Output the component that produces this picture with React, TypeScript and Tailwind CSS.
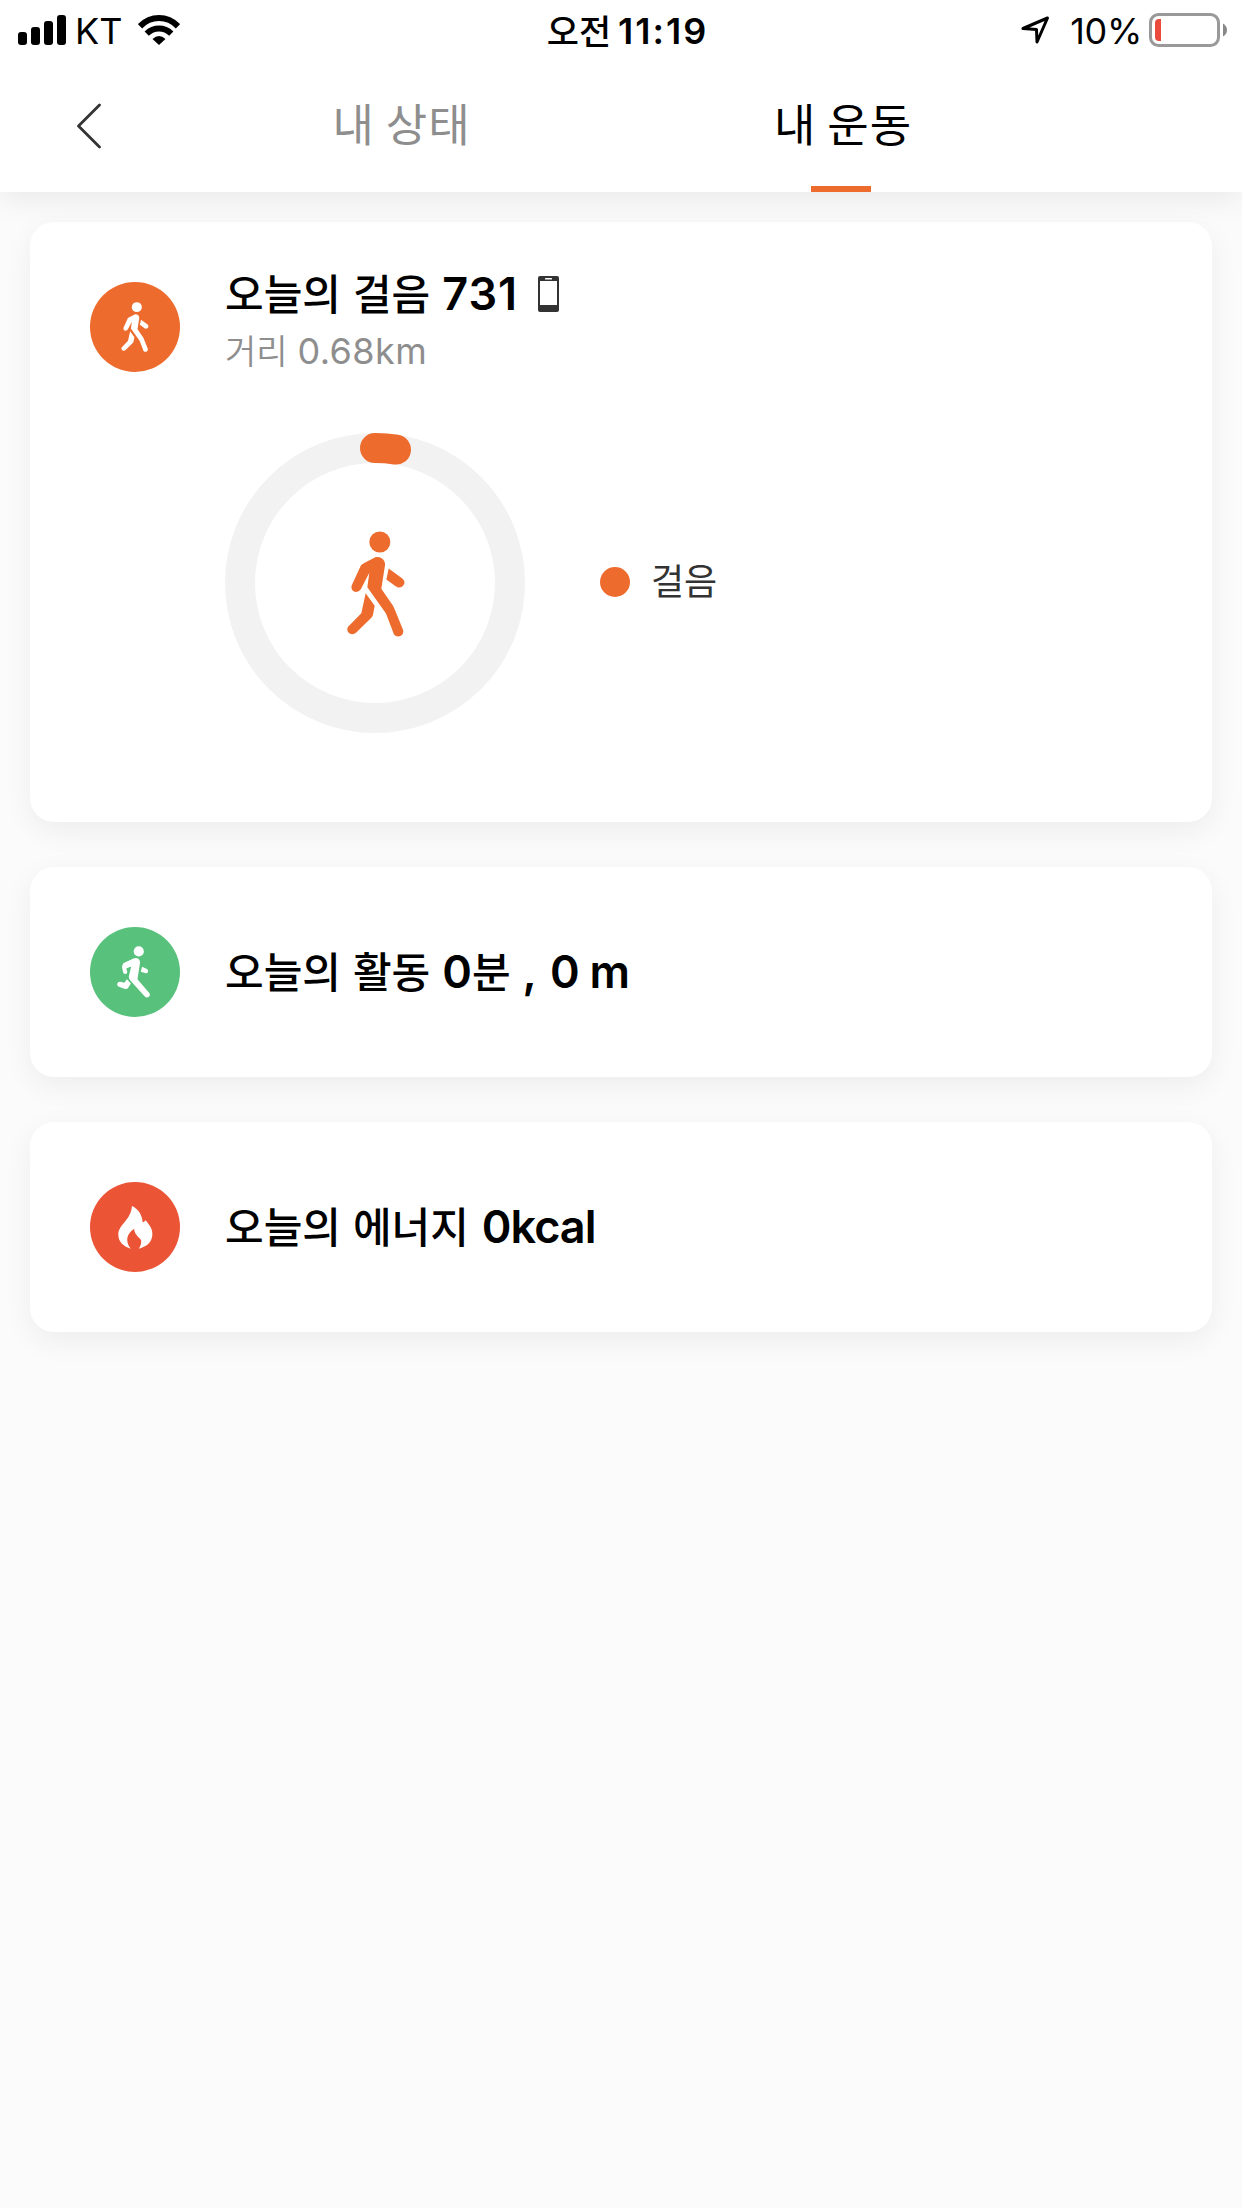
import type { ReactNode } from "react";

interface WordProps {
  children: ReactNode;
  className?: string;
}

function Ko({ children, className = "" }: WordProps) {
  return (
    <span className={`font-['Noto_Sans_CJK_KR',sans-serif] ${className}`}>
      {children}
    </span>
  );
}

function WalkIcon({ className }: { className: string }) {
  return (
    <svg className={className} viewBox="80 332 174 317" fill="currentColor">
      <circle cx="178.500" cy="364.500" r="31.500" />
      <path d="M122 434Q126 430 158 414Q170 406 184 413Q195 420 194 434L183 505L217 554Q220 559 222 564L248 628Q251 640 242 646Q229 651 221 642L197 579L141 500L147 457L121 507Q115 516 103 514Q91 509 94 495Z" />
      <path d="M205 444L245 473Q254 480 252 490Q247 502 234 501Q230 500 226 497L198 477Z" />
      <path d="M136 518L163 556L158 583Q157 588 153 592L107 637Q99 644 89 640Q78 634 82 621Q83 618 87 615L123 578Z" />
    </svg>
  );
}

function RunIcon({ className }: { className: string }) {
  return (
    <svg className={className} viewBox="110 137 100 158" fill="currentColor">
      <circle cx="176" cy="153.500" r="15.500" />
      <path d="M127 194Q128 190 132 188L160 175Q167 172 174 175Q180 179 180 187L172 238L208 280Q212 286 207 291Q201 296 195 291L149 240Q145 235 146 228L153 199L138 205L141 215Q142 221 135 222Q129 222 128 216L125 200Z" />
      <path d="M186 200L201 207Q206 210 204 216Q201 222 195 219L182 215Z" />
      <path d="M140 238L152 251L144 264Q140 270 132 267L114 260Q109 257 111 251Q113 245 120 246L132 249Z" />
    </svg>
  );
}

function FlameIcon({ className }: { className: string }) {
  return (
    <svg className={className} viewBox="115 137 104 130" fill="currentColor">
      <path d="M156 137C169 142 187 158 189 187Q194 184 198 180C204 190 218 200 218 222C218 246 202 260 177 266C183 257 185 251 184 240C177 232 163 222 163 206C150 215 142 226 142 240Q143 256 153 266C132 260 115 246 115 223C115 194 155 178 156 137Z" />
    </svg>
  );
}

function StatusBar() {
  return (
    <div className="flex h-[60px] items-center justify-between pr-[14px] pl-[18px] text-[36px] leading-[60px]">
      <div className="flex w-[500px] items-center">
        <svg className="h-[30px] w-[48px]" viewBox="0 0 48 30">
          <rect x="0" y="17" width="9" height="13" rx="3" />
          <rect x="13" y="12" width="9" height="18" rx="3" />
          <rect x="26" y="6" width="9" height="24" rx="3" />
          <rect x="39" y="0" width="9" height="30" rx="3" />
        </svg>
        <span className="ml-[9px] w-[46px] pt-[2px] font-[380]">KT</span>
        <svg
          className="ml-[17px] h-[30px] w-[42px]"
          viewBox="0 0 42 30"
          fill="none"
          stroke="#000"
        >
          <path d="M2 11.300Q10 3 21 3Q32 3 40 11.300" strokeWidth="6" />
          <path d="M8.700 18.600Q14 13.500 21 13.500Q28 13.500 33.300 18.600" strokeWidth="6" />
          <path d="M14.500 24Q21 17.800 27.500 24L21 30Z" fill="#000" stroke="none" />
        </svg>
      </div>
      <div className="flex pt-[2px] pl-[9px]">
        <Ko className="text-[35px] leading-[57px] font-medium">오전</Ko>
        <span className="ml-[7px] font-semibold tracking-[2px]">11:19</span>
      </div>
      <div className="flex w-[500px] items-center justify-end">
        <svg
          className="h-[29px] w-[29px]"
          viewBox="0 0 29 29"
          fill="none"
          stroke="#000"
          strokeWidth="3"
          strokeLinejoin="round"
        >
          <path d="M2 12.500L26.500 2L16 26L15.500 13.500Z" />
        </svg>
        <span className="ml-[20px] pt-[2px] tracking-[-0.300px]">10%</span>
        <svg className="ml-[7px] h-[34px] w-[79px]" viewBox="0 0 79 34">
          <rect
            x="1.500"
            y="1.500"
            width="68"
            height="31"
            rx="8"
            fill="none"
            stroke="#999"
            strokeWidth="3"
          />
          <path d="M12 6V28H10Q6 28 6 24V10Q6 6 10 6Z" fill="#ea4b3d" />
          <path d="M74 10.500Q78 13 78 17Q78 21 74 23.500Z" fill="#888" />
        </svg>
      </div>
    </div>
  );
}

function Header() {
  return (
    <header className="relative h-[192px] bg-white shadow-[0_6px_30px_rgba(0,0,0,0.08)]">
      <StatusBar />
      <nav className="flex h-[132px] pl-[75px]">
        <svg
          className="mt-[43px] h-[46px] w-[26px]"
          viewBox="0 0 26 46"
          fill="none"
          stroke="#333"
          strokeWidth="2.800"
          strokeLinecap="round"
          strokeLinejoin="round"
        >
          <path d="M24.500 2L3.500 23L24.500 44" />
        </svg>
        <div className="ml-[78px] flex w-[441px] justify-center">
          <Ko className="pl-[4px] text-[45px] leading-[126px] tracking-[0.900px] text-[#8e8e8e]">
            내 상태
          </Ko>
        </div>
        <div className="flex w-[441px] flex-col items-center">
          <Ko className="pl-[5px] text-[45px] leading-[126px] tracking-[0.900px]">내 운동</Ko>
          <div className="h-[6px] w-[60px] bg-[#ed6b2d]" />
        </div>
      </nav>
    </header>
  );
}

function Card({ children, className }: { children: ReactNode; className: string }) {
  return (
    <section
      className={`rounded-[24px] bg-white px-[60px] shadow-[0_9px_30px_rgba(0,0,0,0.06)] ${className}`}
    >
      {children}
    </section>
  );
}

function Badge({ children, className }: { children: ReactNode; className: string }) {
  return (
    <div
      className={`flex h-[90px] w-[90px] shrink-0 items-center justify-center rounded-full text-white ${className}`}
    >
      {children}
    </div>
  );
}

function StepRing() {
  return (
    <div className="grid h-[300px] w-[300px] place-items-center">
      <svg className="col-start-1 row-start-1 h-[300px] w-[300px]" viewBox="0 0 300 300" fill="none">
        <circle cx="150" cy="150" r="135" stroke="#f2f2f2" strokeWidth="30" />
        <path
          d="M150 15A135 135 0 0 1 171 16.600"
          stroke="#ed6b2d"
          strokeWidth="30"
          strokeLinecap="round"
        />
      </svg>
      <WalkIcon className="col-start-1 row-start-1 mt-[1px] ml-[1px] h-[106px] w-[58px] text-[#ed6b2d]" />
    </div>
  );
}

export default function App() {
  return (
    <div className="min-h-[2208px] w-[1242px] bg-[#fbfbfb] font-['Inter','Noto_Sans_CJK_KR',sans-serif] text-black">
      <Header />
      <main className="flex flex-col gap-[45px] px-[30px] pt-[30px]">
        <Card className="h-[600px] pt-[40px]">
          <div className="flex">
            <Badge className="mt-[20px] bg-[#ed6b2d]">
              <WalkIcon className="mr-[1px] h-[50px] w-[28px]" />
            </Badge>
            <div className="ml-[45px]">
              <div className="flex h-[60px] items-baseline text-[45px] leading-[60px] font-[560]">
                <Ko className="text-[42px] font-medium">오늘의</Ko>
                <Ko className="ml-[12px] text-[42px] font-medium">걸음</Ko>
                <span className="ml-[12px] tracking-[1px]">731</span>
                <svg className="mt-[4px] ml-[20px] h-[36px] w-[21px] self-center" viewBox="0 0 21 36">
                  <rect width="21" height="36" rx="2" fill="#333" />
                  <rect x="2" y="5" width="17" height="24" fill="#fff" />
                  <rect x="7" y="2" width="7" height="1.500" rx="0.500" fill="#fff" />
                </svg>
              </div>
              <div className="flex h-[54px] items-baseline pt-[1px] text-[36px] leading-[54px] text-[#8e8e8e]">
                <Ko className="text-[34px] font-[350]">거리</Ko>
                <span className="ml-[10px] font-[370] tracking-[0.400px]">0.68km</span>
              </div>
            </div>
          </div>
          <div className="mt-[57px] ml-[135px] flex items-center">
            <StepRing />
            <div className="mb-[2px] ml-[75px] h-[30px] w-[30px] rounded-full bg-[#ed6b2d]" />
            <Ko className="mb-[9px] ml-[21px] text-[36px] text-[#333]">걸음</Ko>
          </div>
        </Card>

        <Card className="flex h-[210px] items-center">
          <Badge className="bg-[#58c17c]">
            <RunIcon className="mr-[4px] h-[52px] w-[33px]" />
          </Badge>
          <div className="mb-[3px] ml-[45px] flex items-baseline text-[45px] leading-[60px] font-[560]">
            <Ko className="text-[42px] font-medium">오늘의</Ko>
            <Ko className="ml-[12px] text-[42px] font-medium">활동</Ko>
            <span className="ml-[12px]">0</span>
            <Ko className="text-[42px] font-medium">분</Ko>
            <span className="ml-[12px]">,</span>
            <span className="ml-[13px]">0</span>
            <span className="ml-[10px]">m</span>
          </div>
        </Card>

        <Card className="flex h-[210px] items-center">
          <Badge className="bg-[#eb5435]">
            <FlameIcon className="ml-[1px] h-[43px] w-[35px]" />
          </Badge>
          <div className="mb-[3px] ml-[45px] flex items-baseline text-[45px] leading-[60px] font-[560]">
            <Ko className="text-[42px] font-medium">오늘의</Ko>
            <Ko className="ml-[12px] text-[42px] font-medium">에너지</Ko>
            <span className="ml-[13px] tracking-[-1px]">0kcal</span>
          </div>
        </Card>
      </main>
    </div>
  );
}
